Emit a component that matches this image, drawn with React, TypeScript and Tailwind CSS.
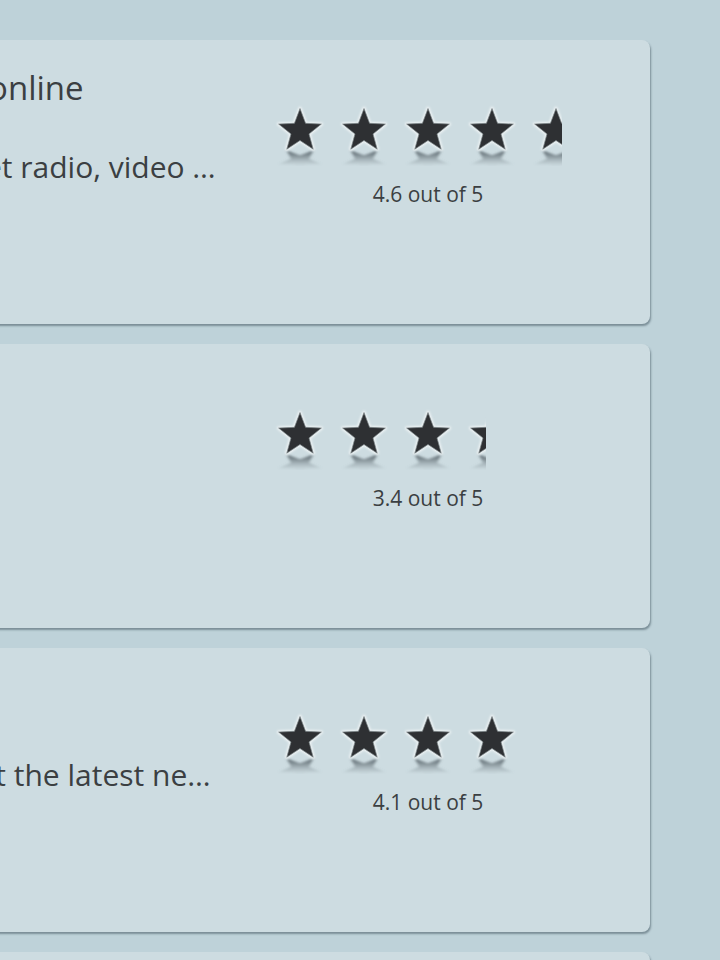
import React from 'react';

type Item = {
  title: string;
  desc: string;
  rating: number;
};

const items: Item[] = [
  { title: 'Listen to all your music online', desc: 'Enjoy thousands of internet radio, video …', rating: 4.6 },
  { title: 'Weather', desc: 'Local forecasts', rating: 3.4 },
  { title: 'News today', desc: 'Stay up to date, read about the latest ne…', rating: 4.1 },
  { title: 'Podcasts', desc: 'Shows', rating: 3.9 },
];

const STAR =
  '32,6.5 37.58,21.31 53.4,22.05 41.03,31.94 45.23,47.2 32,38.5 18.77,47.2 22.97,31.94 10.6,22.05 26.42,21.31';

function Star() {
  return (
    <svg width="64" height="64" viewBox="0 0 64 64" className="shrink-0">
      {/* reflection */}
      <g transform="translate(0 48) scale(1 -0.55) translate(0 -48)" filter="url(#reflBlur)">
        <polygon points={STAR} fill="url(#starReflect)" />
      </g>
      {/* soft light rim */}
      <polygon points={STAR} fill="none" stroke="#f1f5f6" strokeWidth="3.2" strokeLinejoin="round" filter="url(#starBlur)" />
      <polygon points={STAR} fill="#2e3033" stroke="#7d8689" strokeWidth="0.7" strokeLinejoin="round" />
    </svg>
  );
}

function Rating({ value }: { value: number }) {
  return (
    <div className="flex w-[320px] flex-col items-center">
      <div className="w-[320px]">
        <div className="overflow-hidden" style={{ width: (value / 5) * 320 }}>
          <div className="flex w-[320px]">
            {[0, 1, 2, 3, 4].map((i) => (
              <Star key={i} />
            ))}
          </div>
        </div>
      </div>
      <div className="mt-[14px] text-[21px] leading-[28px] text-[#3b3f42]">{value} out of 5</div>
    </div>
  );
}

function Card({ item }: { item: Item }) {
  return (
    <div className="ml-[-430px] flex h-[284px] w-[1080px] shrink-0 items-start rounded-lg bg-[#cddce1] shadow-[1px_2px_2px_rgba(40,60,70,0.45)]">
      <div className="ml-[56px] w-[594px] pt-[28px] text-[#3b3f42]">
        <div className="whitespace-nowrap text-[33px] leading-[40px]">{item.title}</div>
        <div className="mt-[40px] whitespace-nowrap text-[30px] leading-[38px]">{item.desc}</div>
      </div>
      <div className="ml-[48px] pt-[62px]">
        <Rating value={item.rating} />
      </div>
    </div>
  );
}

export default function App() {
  return (
    <div
      className="h-[960px] w-[720px] overflow-hidden bg-[#bed2d9]"
      style={{ fontFamily: '"Open Sans", "Noto Sans", sans-serif' }}
    >
      <svg width="0" height="0" className="absolute">
        <defs>
          <linearGradient id="starReflect" gradientUnits="userSpaceOnUse" x1="0" y1="48" x2="0" y2="18">
            <stop offset="0" stopColor="#48545a" stopOpacity="1" />
            <stop offset="1" stopColor="#8e9ca2" stopOpacity="0" />
          </linearGradient>
          <filter id="starBlur" x="-20%" y="-20%" width="140%" height="140%">
            <feGaussianBlur stdDeviation="0.8" />
          </filter>
          <filter id="reflBlur" x="-20%" y="-50%" width="140%" height="200%">
            <feGaussianBlur stdDeviation="1.5" />
          </filter>
        </defs>
      </svg>
      <div className="flex flex-col gap-5 pt-10">
        {items.map((it) => (
          <Card key={it.title} item={it} />
        ))}
      </div>
    </div>
  );
}
